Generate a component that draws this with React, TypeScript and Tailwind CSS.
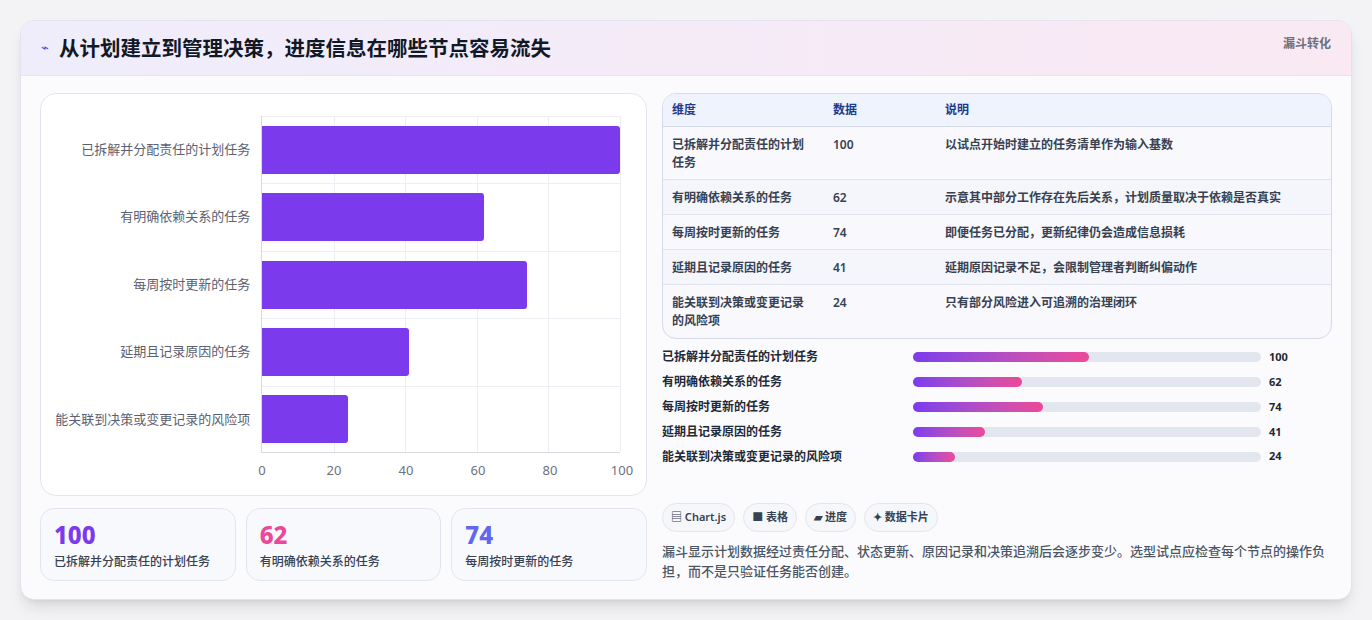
import React from "react";

const rows = [
  { n: "已拆解并分配责任的计划任务", v: 100, d: "以试点开始时建立的任务清单作为输入基数" },
  { n: "有明确依赖关系的任务", v: 62, d: "示意其中部分工作存在先后关系，计划质量取决于依赖是否真实" },
  { n: "每周按时更新的任务", v: 74, d: "即便任务已分配，更新纪律仍会造成信息损耗" },
  { n: "延期且记录原因的任务", v: 41, d: "延期原因记录不足，会限制管理者判断纠偏动作" },
  { n: "能关联到决策或变更记录的风险项", v: 24, d: "只有部分风险进入可追溯的治理闭环" },
];

export default function App() {
  const font = { fontFamily: '"Noto Sans", "Noto Sans CJK SC", sans-serif' };
  return (
    <div className="w-[1372px] h-[620px] bg-[#f3f3f6] pt-[20px] px-[20px]" style={font}>
      <div className="w-[1332px] h-[580px] bg-[#fbfbfe] rounded-[14px] border border-[#e3e3ef] shadow-lg overflow-hidden flex flex-col">
        <div className="h-[55px] shrink-0 flex items-center justify-between px-[20px] bg-gradient-to-r from-[#efedfc] to-[#fae9f3] border-b border-[#e6e4f2]">
          <div className="flex items-center gap-[10px]">
            <span className="text-[#4f46e5] text-[13px]">⌁</span>
            <span className="text-[20.5px] font-bold text-[#111827]">从计划建立到管理决策，进度信息在哪些节点容易流失</span>
          </div>
          <span className="text-[12px] font-semibold text-[#6b7280] -mt-[8px]">漏斗转化</span>
        </div>
        <div className="flex gap-[15px] px-[19px] pt-[17px]">
          <div className="w-[607px] flex flex-col gap-[12px]">
            <div className="h-[403px] bg-white rounded-[16px] border border-[#e3e5ee] pt-[22px] pl-[14px] pr-[26px]">
              <div className="flex">
                <div className="w-[207px] flex flex-col">
                  {rows.map((r) => (
                    <div key={r.n} className="h-[67.4px] flex items-center justify-end pr-[11px] text-[13px] text-[#5b6170]">{r.n}</div>
                  ))}
                </div>
                <div className="relative w-[360px] h-[337px] border-l border-b border-[#d9dbe3]">
                  {[1, 2, 3, 4, 5].map((i) => (
                    <div key={i} className="absolute top-0 bottom-0 w-px bg-[#eceef3]" style={{ left: `${i * 20}%` }} />
                  ))}
                  {[0, 1, 2, 3, 4].map((i) => (
                    <div key={i} className="absolute left-0 right-0 h-px bg-[#eceef3]" style={{ top: i * 67.4 }} />
                  ))}
                  {rows.map((r, i) => (
                    <div key={r.n} className="absolute left-0 h-[48px] bg-[#7c3aed] rounded-r-[3px]" style={{ top: i * 67.4 + 9.7, width: `${r.v}%` }} />
                  ))}
                </div>
              </div>
              <div className="relative ml-[207px] w-[360px] h-[24px] text-[13px] text-[#6b7280]">
                {[0, 20, 40, 60, 80, 100].map((t) => (
                  <span key={t} className="absolute top-[8px] -translate-x-1/2" style={{ left: `${t}%` }}>{t}</span>
                ))}
              </div>
            </div>
            <div className="grid grid-cols-3 gap-[10px]">
              {[
                { v: 100, c: "text-[#7c3aed]", t: rows[0].n },
                { v: 62, c: "text-[#ec4899]", t: rows[1].n },
                { v: 74, c: "text-[#6366f1]", t: rows[2].n },
              ].map((s) => (
                <div key={s.v} className="h-[73px] bg-[#f8f9fd] rounded-[14px] border border-[#e3e5ee] px-[13px] pt-[10px]">
                  <div className={`text-[24px] font-extrabold leading-[32px] ${s.c}`}>{s.v}</div>
                  <div className="text-[12px] text-[#374151] font-medium mt-[2px]">{s.t}</div>
                </div>
              ))}
            </div>
          </div>
          <div className="w-[671px] flex flex-col">
            <div className="rounded-[14px] border border-[#d5daea] overflow-hidden bg-[#f8f8fd] text-[12px]">
              <div className="flex h-[33px] items-center bg-[#eef3fd] border-b border-[#d5daea] font-semibold text-[#1e3a8a]">
                <div className="w-[161px] pl-[9px]">维度</div>
                <div className="w-[121px] pl-[9px]">数据</div>
                <div className="flex-1">说明</div>
              </div>
              {rows.map((r, i) => (
                <div key={r.n} className={`flex ${i === 0 || i === 4 ? "h-[53px]" : "h-[35px]"} pt-[9px] font-semibold text-[#374151] ${i < 4 ? "border-b border-[#e1e4ee]" : ""} ${i % 2 ? "bg-[#f4f6fb]" : ""}`}>
                  <div className="w-[161px] pl-[9px] pr-[12px] leading-[18px]">{r.n}</div>
                  <div className="w-[121px] pl-[9px] leading-[18px]">{r.v}</div>
                  <div className="flex-1 leading-[18px]">{r.d}</div>
                </div>
              ))}
            </div>
            <div className="mt-[6px] flex flex-col">
              {rows.map((r) => (
                <div key={r.n} className="h-[24.8px] flex items-center text-[12px] font-semibold text-[#1f2937]">
                  <div className="w-[251px]">{r.n}</div>
                  <div className="w-[348px] h-[10px] rounded-full bg-[#e2e6ee]">
                    <div className="h-full rounded-full bg-gradient-to-r from-[#7c3aed] to-[#ec4899]" style={{ width: `${r.v * 0.505}%` }} />
                  </div>
                  <div className="ml-[8px] text-[11px] font-bold">{r.v}</div>
                </div>
              ))}
            </div>
            <div className="flex gap-[8px] mt-[34px]">
              {["▤ Chart.js", "■ 表格", "▰ 进度", "✦ 数据卡片"].map((c) => (
                <span key={c} className="h-[29px] px-[8px] flex items-center rounded-full border border-[#e3e5ee] bg-[#f6f7fb] text-[11px] font-semibold text-[#374151]">{c}</span>
              ))}
            </div>
            <p className="mt-[9px] text-[13px] leading-[20px] font-medium text-[#4b5563]">
              漏斗显示计划数据经过责任分配、状态更新、原因记录和决策追溯后会逐步变少。选型试点应检查每个节点的操作负担，而不是只验证任务能否创建。
            </p>
          </div>
        </div>
      </div>
    </div>
  );
}
